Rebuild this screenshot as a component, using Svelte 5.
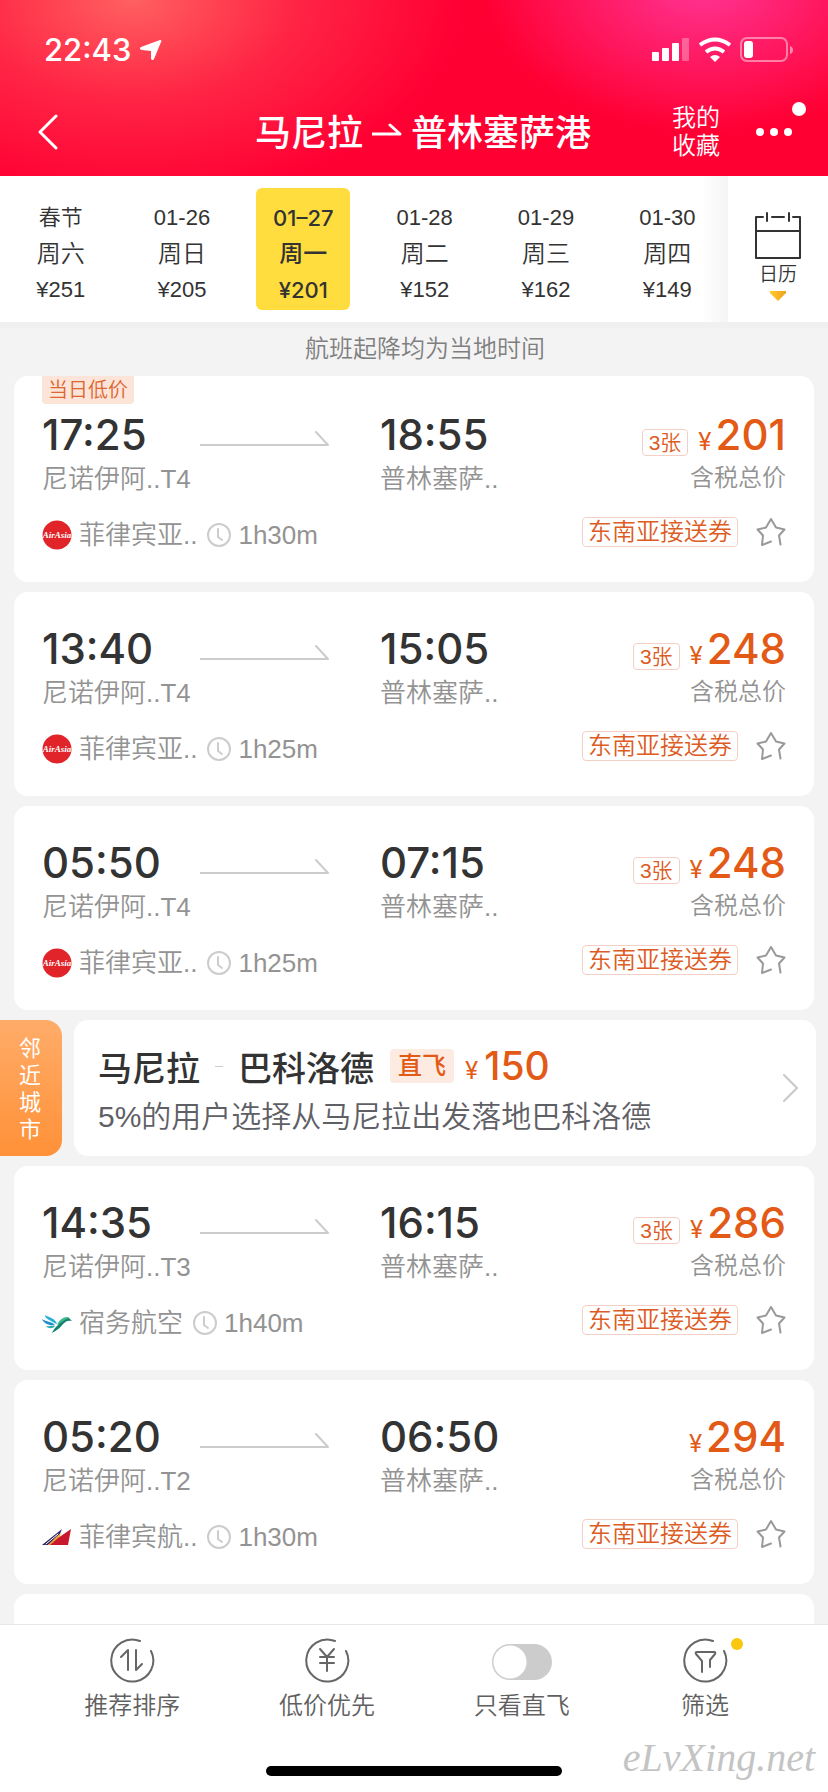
<script lang="ts">
	type Flight = {
		depart: string;
		arrive: string;
		terminal: string;
		airline: string;
		logo: 'airasia' | 'cebu' | 'pal';
		duration: string;
		price: number;
		left?: string;
		lowest?: boolean;
	};

	const days = [
		{ date: '春节', week: '周六', price: 251 },
		{ date: '01-26', week: '周日', price: 205 },
		{ date: '01–27', week: '周一', price: 201 },
		{ date: '01-28', week: '周二', price: 152 },
		{ date: '01-29', week: '周三', price: 162 },
		{ date: '01-30', week: '周四', price: 149 }
	];

	const flights: Flight[] = [
		{ depart: '17:25', arrive: '18:55', terminal: 'T4', airline: '菲律宾亚..', logo: 'airasia', duration: '1h30m', price: 201, left: '3张', lowest: true },
		{ depart: '13:40', arrive: '15:05', terminal: 'T4', airline: '菲律宾亚..', logo: 'airasia', duration: '1h25m', price: 248, left: '3张' },
		{ depart: '05:50', arrive: '07:15', terminal: 'T4', airline: '菲律宾亚..', logo: 'airasia', duration: '1h25m', price: 248, left: '3张' },
		{ depart: '14:35', arrive: '16:15', terminal: 'T3', airline: '宿务航空', logo: 'cebu', duration: '1h40m', price: 286, left: '3张' },
		{ depart: '05:20', arrive: '06:50', terminal: 'T2', airline: '菲律宾航..', logo: 'pal', duration: '1h30m', price: 294 }
	];

	let selected = $state(2);
	let directOnly = $state(false);
</script>

{#snippet logo(name: string)}
	<svg class="logo" viewBox="0 0 30 30" aria-hidden="true">
		{#if name === 'airasia'}
			<circle cx="15" cy="15" r="14.5" fill="#e0242a" />
			<text x="15" y="18" text-anchor="middle" class="logo-text">AirAsia</text>
		{:else if name === 'cebu'}
			<path d="M3 7c5 3 10 3 12 9-4-1-5-3-8-4-2-1-4-3-4-5z" fill="#28b0d6" />
			<path d="M0 11c5 3 9 2 13 6-5 1-11-1-13-6z" fill="#1f8fd0" />
			<path d="M4 18c3 1 6-1 9 0-2 3-7 3-9 0z" fill="#2cb0b4" />
			<path d="M10 25c1-3 3-5 6-8 4-6 8-9 11-7l3 3c-4-1-6 0-9 3-3 4-6 6-11 9z" fill="#13836f" />
			<path d="M15 17c2-5 6-8 10-8l3 1c-6 1-9 5-13 7z" fill="#45b98f" />
		{:else}
			<path d="M0 23L20 7l-3 7L6 23z" fill="#28235f" />
			<path d="M6 23l9-9 4-3-2 5-8 7z" fill="#f0a63c" />
			<path d="M4 22l12-10" stroke="#fff" stroke-width="1" />
			<path d="M29 7l-3 16H8l8-7z" fill="#c9182b" />
		{/if}
	</svg>
{/snippet}

{#snippet ring()}
	<path d="M31 4A21 21 0 1 0 42 14" />
{/snippet}

{#snippet flightCard(f: Flight)}
	<article class="card" class:lowest={f.lowest}>
		{#if f.lowest}<span class="flag">当日低价</span>{/if}
		<div class="route">
			<div>
				<div class="time">{f.depart}</div>
				<div class="place">尼诺伊阿..{f.terminal}</div>
			</div>
			<svg class="line" viewBox="0 0 130 16" aria-hidden="true"><path d="M0 14h128L116 1" /></svg>
			<div>
				<div class="time">{f.arrive}</div>
				<div class="place">普林塞萨..</div>
			</div>
			<div class="fare">
				<div class="amount">
					{#if f.left}<span class="left">{f.left}</span>{/if}
					<span class="yen">¥</span><span class="time">{f.price}</span>
				</div>
				<div class="tax">含税总价</div>
			</div>
		</div>
		<div class="meta">
			{@render logo(f.logo)}
			<span>{f.airline}</span>
			<svg class="clock" viewBox="0 0 24 24" aria-hidden="true"><circle cx="12" cy="12" r="11" /><path d="M11 6v8l4 3" /></svg>
			<span>{f.duration}</span>
			<span class="coupon">东南亚接送券</span>
			<button class="star" aria-label="收藏">
				<svg viewBox="0 0 30 30"><path d="M24.500 27.500L23 18.500L28.500 12.500L20 10.500L15 2L10 10.500L1.500 12.500L7 18.500L6 28L15 24.500" /></svg>
			</button>
		</div>
	</article>
{/snippet}

<div class="app">
	<header>
		<div class="status">
			<span class="clock-time">22:43</span>
			<svg class="locate" viewBox="0 0 22 20" aria-hidden="true"><path d="M20 0c1 0 2 1 1 2L14 19c-1 2-3 1-3-1v-7l-9-1c-2 0-3-2-1-3z" /></svg>
			<svg class="signals" viewBox="0 0 142 26" aria-hidden="true">
				<rect x="0" y="15" width="7" height="9" rx="1" />
				<rect x="10" y="11" width="7" height="13" rx="1" />
				<rect x="20" y="6" width="7" height="18" rx="1" />
				<rect x="30" y="1" width="7" height="23" rx="1" opacity=".3" />
				<path d="M48 8q15-11 30 0M54 15q9-7 18 0" class="wave" />
				<path d="M58 20q5-4 10 0l-5 5z" />
				<rect x="89" y="1" width="46" height="23" rx="6" class="battery" />
				<rect x="92" y="4" width="9" height="17" rx="3" />
				<path d="M138 9q3 1 3 4t-3 4z" opacity=".5" />
			</svg>
		</div>
		<nav class="bar">
			<button class="back" aria-label="返回">
				<svg viewBox="0 0 22 36"><path d="M19 2L3 18l16 16" /></svg>
			</button>
			<h1>
				马尼拉
				<svg viewBox="0 0 30 14" aria-hidden="true"><path d="M0 11h28L18 2" /></svg>
				普林塞萨港
			</h1>
			<a class="saved" href="#saved">我的<br />收藏</a>
			<button class="more" aria-label="更多"><i></i><i></i><i></i></button>
		</nav>
	</header>

	<section class="dates">
		<div class="days">
			{#each days as day, i}
				<button class="day" class:active={i === selected} onclick={() => (selected = i)}>
					<span>{day.date}</span>
					<span class="week">{day.week}</span>
					<span>¥{day.price}</span>
				</button>
			{/each}
		</div>
		<button class="calendar">
			<svg class="cal" viewBox="0 0 48 48" aria-hidden="true">
				<path d="M9 5H2v41h44V5h-7M18 5h12M13 1v8M35 1v8M2 19h44" />
			</svg>
			<span>日历</span>
			<svg class="caret" viewBox="0 0 16 10" aria-hidden="true">
				<defs><linearGradient id="gold"><stop stop-color="#ffcb2e" /><stop offset="1" stop-color="#efa01c" /></linearGradient></defs>
				<path d="M0 0h16v2L8 10L0 2z" fill="url(#gold)" />
			</svg>
		</button>
	</section>

	<main>
		<p class="notice">航班起降均为当地时间</p>
		{#each flights.slice(0, 3) as f}
			{@render flightCard(f)}
		{/each}

		<section class="nearby">
			<div class="nearby-tag">邻近城市</div>
			<a class="nearby-card" href="#nearby">
				<div class="nearby-text">
					<div class="nearby-title">
						<strong>马尼拉</strong><span class="dash"></span><strong>巴科洛德</strong>
						<span class="direct">直飞</span>
						<span class="yen">¥</span><span class="nearby-price">150</span>
					</div>
					<div class="nearby-sub">5%的用户选择从马尼拉出发落地巴科洛德</div>
				</div>
				<svg class="chevron" viewBox="0 0 16 28" aria-hidden="true"><path d="M1 1l13 13L1 27" /></svg>
			</a>
		</section>

		{#each flights.slice(3) as f}
			{@render flightCard(f)}
		{/each}
		<article class="card"></article>
	</main>

	<footer>
		<div class="tabs">
			<button class="tab">
				<svg viewBox="0 0 46 46" aria-hidden="true">{@render ring()}<path d="M12 20l7-7v20M27 13v20l6-6" /></svg>
				推荐排序
			</button>
			<button class="tab">
				<svg viewBox="0 0 46 46" aria-hidden="true">{@render ring()}<path d="M16 12l7 8 7-8M23 20v14M16 20h14M16 26h14" /></svg>
				低价优先
			</button>
			<label class="tab">
				<input type="checkbox" bind:checked={directOnly} />
				只看直飞
			</label>
			<button class="tab">
				<span class="filter">
					<svg viewBox="0 0 46 46" aria-hidden="true">{@render ring()}<path d="M20 35V24l-6-7q-1-2 1-2h17q2 0 1 2l-5 6v7" /></svg>
				</span>
				筛选
			</button>
		</div>
		<div class="home"></div>
		<span class="watermark">eLvXing.net</span>
	</footer>
</div>

<style>
	:global(body) {
		margin: 0;
		background: #f3f3f3;
	}
	.app {
		display: flex;
		flex-direction: column;
		height: 100vh;
		font-family: 'Liberation Sans', 'Noto Sans CJK SC', sans-serif;
		font-weight: 350;
		color: #333;
	}
	button {
		padding: 0;
		border: 0;
		background: none;
		font: inherit;
		color: inherit;
	}
	a {
		color: inherit;
		text-decoration: none;
	}
	svg {
		display: block;
		flex: none;
	}
	path {
		stroke-linecap: round;
		stroke-linejoin: round;
	}

	/* header */
	header {
		flex: none;
		color: #fff;
		background:
			radial-gradient(ellipse 330px 200px at 16% 0, #ff6060, rgba(255, 60, 80, 0.6) 50%, transparent),
			radial-gradient(ellipse 220px 150px at 85% -10%, #ff3596, transparent),
			#ff0033;
	}
	.status {
		display: flex;
		align-items: center;
		height: 88px;
		padding: 12px 34px 0 44px;
		box-sizing: border-box;
	}
	.clock-time {
		font: 500 31px/40px Inter, sans-serif;
	}
	.locate {
		width: 22px;
		height: 20px;
		margin-left: 9px;
		fill: #fff;
	}
	.signals {
		width: 142px;
		height: 26px;
		margin-left: auto;
		fill: #fff;
	}
	.wave {
		fill: none;
		stroke: #fff;
		stroke-width: 4;
		stroke-linecap: butt;
	}
	.battery {
		fill: none;
		stroke: rgba(255, 255, 255, 0.45);
		stroke-width: 2;
	}
	.bar {
		display: grid;
		grid-template-columns: 134px 1fr 70px 86px;
		align-items: center;
		height: 88px;
	}
	.back svg {
		width: 22px;
		height: 36px;
		margin-left: 37px;
		fill: none;
		stroke: #fff;
		stroke-width: 3;
	}
	h1 {
		display: flex;
		align-items: center;
		justify-content: center;
		gap: 9px;
		margin: 0;
		padding: 0 0 4px 40px;
		font-size: 36px;
		font-weight: 500;
		white-space: nowrap;
	}
	h1 svg {
		width: 30px;
		height: 14px;
		fill: none;
		stroke: #fff;
		stroke-width: 3;
	}
	.saved {
		font-size: 24px;
		line-height: 28px;
	}
	.more {
		position: relative;
		display: flex;
		gap: 6px;
		padding: 16px 14px;
	}
	.more::after {
		content: '';
		position: absolute;
		top: -10px;
		right: 22px;
		width: 14px;
		height: 14px;
		border-radius: 50%;
		background: #fff;
	}
	.more i {
		width: 8px;
		height: 8px;
		border-radius: 50%;
		background: #fff;
	}

	/* date strip */
	.dates {
		flex: none;
		display: flex;
		height: 146px;
		background: #fff;
		border-bottom: 6px solid #f0f0f0;
	}
	.days {
		flex: 1;
		display: grid;
		grid-template-columns: repeat(6, 1fr);
		place-items: center;
		background: linear-gradient(to left, #f5f5f5, #fff 26px);
	}
	.day {
		display: flex;
		flex-direction: column;
		width: 94px;
		padding: 12px 0 2px;
		border-radius: 6px;
		font-size: 22px;
		line-height: 36px;
	}
	.week {
		font-size: 24px;
	}
	.day.active {
		background: #ffdd3f;
		font-family: Inter, 'Noto Sans CJK SC', sans-serif;
		font-weight: 500;
	}
	.calendar {
		display: flex;
		flex-direction: column;
		align-items: center;
		width: 100px;
		padding-top: 36px;
		font-size: 19px;
		line-height: 30px;
	}
	.cal {
		width: 48px;
		height: 48px;
		fill: none;
		stroke: #333;
		stroke-width: 2;
	}
	.caret {
		width: 16px;
		height: 10px;
		margin-top: 1px;
	}

	/* list */
	main {
		flex: 1;
		min-height: 0;
		overflow-y: auto;
		scrollbar-width: none;
		display: flex;
		flex-direction: column;
		gap: 10px;
	}
	main > * {
		flex: none;
	}
	.notice {
		margin: 0 0 -10px;
		height: 48px;
		padding-left: 22px;
		font-size: 24px;
		line-height: 42px;
		text-align: center;
		color: #7f7f7f;
	}
	.card {
		position: relative;
		min-height: 204px;
		margin: 0 14px;
		padding: 32px 28px 27px;
		box-sizing: border-box;
		border-radius: 14px;
		background: #fff;
	}
	.card.lowest {
		padding-top: 34px;
	}
	.flag {
		position: absolute;
		top: 0;
		left: 28px;
		padding: 1px 6px 0;
		border-radius: 0 0 4px 4px;
		background: #fde4d8;
		font-size: 20px;
		line-height: 27px;
		color: #dc6530;
	}
	.route {
		display: grid;
		grid-template-columns: 158px 180px 1fr auto;
	}
	.time {
		font: 500 42px/50px Inter, sans-serif;
	}
	.place {
		font-size: 26px;
		line-height: 38px;
		color: #939393;
	}
	.line {
		width: 130px;
		height: 16px;
		margin-top: 21px;
		fill: none;
		stroke: #ccc;
		stroke-width: 2;
	}
	.fare {
		text-align: right;
	}
	.amount {
		display: flex;
		align-items: baseline;
		justify-content: flex-end;
		height: 50px;
		color: #e25a16;
	}
	.yen {
		font: 400 24px/30px Inter, sans-serif;
	}
	.amount .yen {
		margin: 0 4px 0 10px;
	}
	.left,
	.coupon {
		border: 1px solid #f3cfc6;
		border-radius: 4px;
		color: #dc5c24;
	}
	.left {
		padding: 0 6px;
		font-size: 21px;
		line-height: 25px;
	}
	.tax {
		font-size: 24px;
		line-height: 36px;
		color: #939393;
	}
	.meta {
		display: flex;
		align-items: center;
		height: 40px;
		margin-top: 17px;
		font-size: 26px;
		line-height: 38px;
		color: #939393;
	}
	.logo {
		width: 30px;
		height: 30px;
		margin-right: 7px;
	}
	.logo-text {
		font: italic bold 9px 'Liberation Serif', serif;
		fill: #fff;
	}
	.clock {
		width: 24px;
		height: 24px;
		margin: 0 7px 0 10px;
		fill: none;
		stroke: #ccc;
		stroke-width: 2;
	}
	.coupon {
		margin: 0 18px 6px auto;
		padding: 0 5px;
		font-size: 24px;
		line-height: 28px;
	}
	.star {
		margin-bottom: 6px;
	}
	.star svg {
		width: 30px;
		height: 30px;
		fill: none;
		stroke: #999;
		stroke-width: 2;
	}

	/* nearby city */
	.nearby {
		display: flex;
		gap: 12px;
		padding-right: 12px;
	}
	.nearby-tag {
		display: flex;
		align-items: center;
		width: 22px;
		padding: 2px 21px 0 19px;
		border-radius: 0 16px 16px 0;
		background: linear-gradient(#ffac69, #ff9138);
		font-size: 22px;
		line-height: 27px;
		font-weight: 400;
		color: #fff;
	}
	.nearby-card {
		flex: 1;
		display: flex;
		align-items: center;
		padding: 20px 17px 14px 24px;
		border-radius: 14px;
		background: #fff;
	}
	.nearby-text {
		flex: 1;
	}
	.nearby-title {
		display: flex;
		align-items: center;
		height: 52px;
		font-size: 34px;
	}
	.nearby-title strong {
		font-weight: 500;
	}
	.dash {
		width: 8px;
		height: 1px;
		margin: 0 15px;
		background: #ccc;
	}
	.direct {
		margin-left: 16px;
		padding: 0 8px;
		border-radius: 4px;
		background: #fdebe1;
		font-size: 24px;
		line-height: 34px;
		font-weight: 500;
		color: #e25a16;
	}
	.nearby-title .yen {
		margin: 10px 6px 0 11px;
		color: #e25a16;
	}
	.nearby-price {
		font: 500 39px/50px Inter, sans-serif;
		color: #e25a16;
	}
	.nearby-sub {
		font-size: 30px;
		line-height: 50px;
		color: #5f6066;
	}
	.chevron {
		width: 16px;
		height: 28px;
		margin-bottom: 6px;
		fill: none;
		stroke: #c8c8cc;
		stroke-width: 2;
	}

	/* bottom bar */
	footer {
		position: relative;
		flex: none;
		height: 167px;
		border-top: 1px solid #e6e6e6;
		background: #fff;
	}
	.tabs {
		display: grid;
		grid-template-columns: 195fr 195fr 195fr 172fr;
		padding: 12px 37px 0 35px;
	}
	.tab {
		display: flex;
		flex-direction: column;
		align-items: center;
		font-size: 24px;
		line-height: 46px;
		color: #606060;
	}
	.tab svg {
		width: 46px;
		height: 46px;
		fill: none;
		stroke: #666;
		stroke-width: 2;
	}
	.tab input {
		appearance: none;
		width: 60px;
		height: 36px;
		margin: 7px 0 3px;
		border-radius: 18px;
		background: radial-gradient(circle at 18px 18px, #fff 16px, #ccc 17px);
	}
	.tab input:checked {
		background: radial-gradient(circle at 42px 18px, #fff 16px, #ffc70f 17px);
	}
	.filter {
		position: relative;
	}
	.filter::after {
		content: '';
		position: absolute;
		top: 1px;
		right: -15px;
		width: 12px;
		height: 12px;
		border-radius: 50%;
		background: #f9c80e;
	}
	.home {
		position: absolute;
		bottom: 16px;
		left: 50%;
		width: 296px;
		height: 10px;
		margin-left: -148px;
		border-radius: 5px;
		background: #000;
	}
	.watermark {
		position: absolute;
		right: 13px;
		bottom: 12px;
		font: italic 40px/44px 'Liberation Serif', serif;
		color: #c4c4c4;
	}
</style>
